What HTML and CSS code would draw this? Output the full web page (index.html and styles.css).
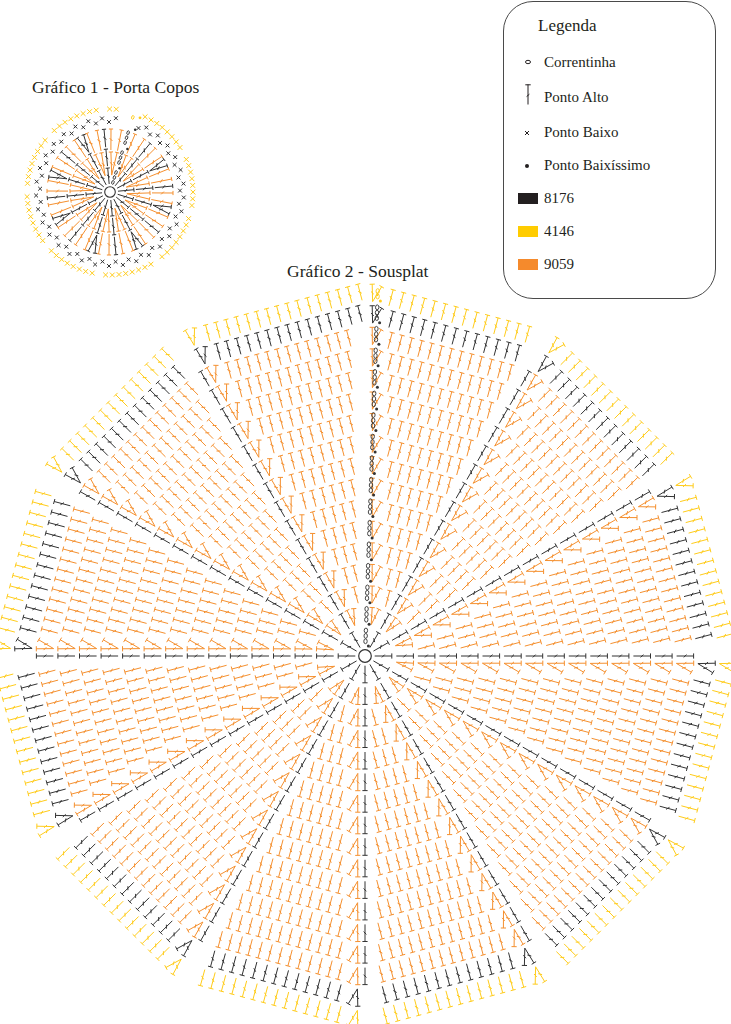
FILE: index.html
```html
<!DOCTYPE html>
<html lang="pt">
<head>
<meta charset="utf-8">
<title>Gráficos - Porta Copos e Sousplat</title>
<link rel="stylesheet" href="styles.css">
</head>
<body>
<main class="sheet">
  <svg id="chart" class="chart" width="731" height="1024" viewBox="0 0 731 1024" xmlns="http://www.w3.org/2000/svg">
    <text class="title" x="32" y="93">Gráfico 1 - Porta Copos</text>
    <text class="title" x="287" y="277">Gráfico 2 - Sousplat</text>
    <g id="marks"></g>
  </svg>
  <aside class="legend">
    <h2 class="legend-title">Legenda</h2>
    <ul class="legend-list">
      <li class="legend-item legend-item--first">
        <span class="legend-icon"><svg width="20" height="12" viewBox="0 0 20 12"><ellipse cx="10" cy="6" rx="2.5" ry="1.7" fill="none" stroke="#231f20" stroke-width="1"/></svg></span>
        <span>Correntinha</span>
      </li>
      <li class="legend-item legend-item--tall">
        <span class="legend-icon"><svg width="20" height="28" viewBox="0 0 20 28"><path d="M10 0.5V20.5M7.3 0.8H12.7M8.6 12.6L11.4 10.2" fill="none" stroke="#231f20" stroke-width="1"/></svg></span>
        <span>Ponto Alto</span>
      </li>
      <li class="legend-item">
        <span class="legend-icon"><svg width="20" height="10" viewBox="0 0 20 10"><path d="M7 3L11 7M7 7L11 3" fill="none" stroke="#231f20" stroke-width="1"/></svg></span>
        <span>Ponto Baixo</span>
      </li>
      <li class="legend-item">
        <span class="legend-icon"><svg width="20" height="10" viewBox="0 0 20 10"><circle cx="9" cy="5" r="2" fill="#231f20"/></svg></span>
        <span>Ponto Baixíssimo</span>
      </li>
      <li class="legend-item">
        <span class="legend-icon"><span class="swatch swatch--black"></span></span>
        <span>8176</span>
      </li>
      <li class="legend-item">
        <span class="legend-icon"><span class="swatch swatch--yellow"></span></span>
        <span>4146</span>
      </li>
      <li class="legend-item">
        <span class="legend-icon"><span class="swatch swatch--orange"></span></span>
        <span>9059</span>
      </li>
    </ul>
  </aside>
</main>
<script src="script.js"></script>
</body>
</html>
```
FILE: styles.css
```css
* { box-sizing: border-box; }
html, body { margin: 0; padding: 0; background: #ffffff; }
body {
  font-family: "Liberation Serif", "Times New Roman", serif;
  color: #231f20;
}
.sheet {
  position: relative;
  width: 731px;
  height: 1024px;
  overflow: hidden;
}
.chart { display: block; }
.title {
  font-family: "Liberation Serif", "Times New Roman", serif;
  font-size: 17.5px;
  fill: #231f20;
}
.legend {
  position: absolute;
  left: 503px;
  top: 1px;
  width: 213px;
  height: 298px;
  border: 1.2px solid #4a4a4a;
  border-radius: 30px;
  padding-top: 5px;
  background: #ffffff;
}
.legend-title {
  margin: 0;
  height: 38px;
  line-height: 38px;
  padding-left: 34px;
  font-size: 17px;
  font-weight: normal;
}
.legend-list { list-style: none; margin: 0; padding: 0; }
.legend-item {
  display: flex;
  align-items: center;
  gap: 6px;
  height: 33px;
  padding-left: 14px;
  font-size: 15px;
}
.legend-item--first { height: 34px; }
.legend-item--tall { height: 37px; }
.legend-icon {
  width: 20px;
  height: 100%;
  display: flex;
  align-items: center;
  justify-content: center;
}
.legend-icon svg { display: block; }
.swatch { display: block; width: 20px; height: 11px; }
.swatch--black { background: #231f20; }
.swatch--yellow { background: #ffcc00; }
.swatch--orange { background: #f58a2c; }
```
FILE: script.js
```js
(function () {
  var COL = { k: '#333333', o: '#f5902f', y: '#ffcc1a' };
  var P = { k: [], o: [], y: [] };
  var extra = [];
  var D = Math.PI / 180;
  function f(n) { return n.toFixed(1); }
  function seg(c, x0, y0, x1, y1) {
    P[c].push('M' + f(x0) + ' ' + f(y0) + 'L' + f(x1) + ' ' + f(y1));
  }
  function dc(c, bx, by, tx, ty, bw) {
    bw = bw || 2.6;
    var dx = tx - bx, dy = ty - by, L = Math.hypot(dx, dy);
    var ux = dx / L, uy = dy / L, px = -uy, py = ux;
    seg(c, bx, by, tx, ty);
    seg(c, tx + px * bw, ty + py * bw, tx - px * bw, ty - py * bw);
    var mx = bx + dx * 0.5, my = by + dy * 0.5, t = 1.4;
    seg(c, mx + px * t - ux * t, my + py * t - uy * t, mx - px * t + ux * t, my - py * t + uy * t);
  }
  function sc(c, x, y, s) {
    seg(c, x - s, y - s, x + s, y + s);
    seg(c, x - s, y + s, x + s, y - s);
  }
  function oval(c, x, y, ang, rx, ry) {
    extra.push('<ellipse cx="' + f(x) + '" cy="' + f(y) + '" rx="' + rx + '" ry="' + ry +
      '" transform="rotate(' + f(ang) + ' ' + f(x) + ' ' + f(y) + ')" fill="none" stroke="' + COL[c] + '" stroke-width="0.9"/>');
  }
  function dot(c, x, y, r) {
    extra.push('<circle cx="' + f(x) + '" cy="' + f(y) + '" r="' + r + '" fill="' + COL[c] + '"/>');
  }

  /* ---------- Gráfico 2 - Sousplat ---------- */
  var cx = 365, cy = 656, R0 = 7, NR = 17, H = (361 - R0) / NR;
  var T15 = Math.tan(15 * D), C15 = Math.cos(15 * D), S = 10.6;
  for (var k = 0; k < 12; k++) {
    var a = (-90 + 30 * k) * D, b = a + 15 * D;
    var ex = Math.cos(b), ey = Math.sin(b), qx = -Math.sin(b), qy = Math.cos(b);
    var pt = (function (ex, ey, qx, qy) {
      return function (u, v) { return [cx + ex * u + qx * v, cy + ey * u + qy * v]; };
    })(ex, ey, qx, qy);
    for (var r = 2; r <= NR; r++) {
      var uT = R0 + r * H, uB = uT - H * 0.8;
      var c = r === NR ? 'y' : (r === NR - 1 ? 'k' : 'o');
      var outer = r >= NR - 1;
      var wB = uB * T15;
      var vS = -wB + 3;
      var vEnd = wB - (outer ? (6 + 0.035 * uT) : (5 + 0.03 * uT));
      if (k === 11 && outer) vEnd = wB - 3;
      var span = vEnd - vS;
      if (span < -2) continue;
      if (span < S * 0.6) {
        var bb = pt(uB, (vS + vEnd) / 2), tt = pt(uT, (vS + vEnd) / 2);
        dc(c, bb[0], bb[1], tt[0], tt[1]);
        continue;
      }
      var slots = Math.max(1, Math.round(span / S)), sp = span / slots;
      var b0 = pt(uB, vS + sp * 0.45), t1 = pt(uT, vS), t2 = pt(uT, vS + sp * 0.9);
      dc(c, b0[0], b0[1], t1[0], t1[1]);
      dc(c, b0[0], b0[1], t2[0], t2[1]);
      for (var i0 = 2; i0 <= slots; i0++) {
        var vv = vS + i0 * sp;
        var B = pt(uB, vv), T = pt(uT, vv);
        dc(c, B[0], B[1], T[0], T[1]);
      }
    }
    /* spokes */
    var sx = Math.cos(a), sy = Math.sin(a);
    if (k === 0) {
      var ad = -88, a0 = ad * D, zx = Math.cos(a0), zy = Math.sin(a0), nx = -zy, ny = zx;
      for (var rr = 1; rr <= NR; rr++) {
        var r0 = (R0 + (rr - 1) * H) / C15 + 2;
        var cc = rr === NR ? 'y' : 'k';
        dot(cc, cx + zx * (r0 + 1) + nx * 3, cy + zy * (r0 + 1) + ny * 3, 1.5);
        for (var j = 0; j < 3; j++) {
          var rho = r0 + 5.5 + j * 5.4;
          if (rr === NR && j > 1) break;
          oval(cc, cx + zx * rho, cy + zy * rho, ad, 2.4, 1.7);
        }
      }
    } else {
      for (var rs = 1; rs <= NR - 2; rs++) {
        var rb = (R0 + (rs - 1) * H) / C15 + 2.5, rt = (R0 + rs * H) / C15 - 2;
        dc('k', cx + sx * rb, cy + sy * rb, cx + sx * rt, cy + sy * rt);
      }
    }
  }
  extra.push('<circle cx="' + cx + '" cy="' + cy + '" r="6.3" fill="none" stroke="#333333" stroke-width="1.2"/>');

  /* ---------- Gráfico 1 - Porta Copos ---------- */
  var gx = 110, gy = 192;
  function pp(rad, ang) { return [gx + Math.cos(ang * D) * rad, gy + Math.sin(ang * D) * rad]; }
  function rdc(c, r1, a1, r2, a2, bw) {
    var p1 = pp(r1, a1), p2 = pp(r2, a2);
    dc(c, p1[0], p1[1], p2[0], p2[1], bw || 2.1);
  }
  extra.push('<circle cx="' + gx + '" cy="' + gy + '" r="5.3" fill="none" stroke="#333333" stroke-width="1.1"/>');
  var base = -73, step = 22.5;
  for (var g = 0; g < 16; g++) {
    var phi = base + step * g;
    if (g === 0) {
      for (var m = 0; m < 12; m++) {
        var rh = 10 + m * 5.2;
        if (m % 4 === 3) {
          var pd = pp(rh, phi + 5);
          dot('k', pd[0], pd[1], 1.3);
        } else {
          var po = pp(rh, phi);
          oval('k', po[0], po[1], phi, 1.9, 1.2);
        }
      }
      var py1 = pp(78, phi), py2 = pp(80, phi + 5);
      oval('y', py1[0], py1[1], phi, 1.9, 1.2);
      dot('y', py2[0], py2[1], 1.4);
    } else {
      rdc('k', 8, phi, 24, phi);
      rdc('k', 26, phi, 43, phi);
      if (g % 2 === 0) {
        rdc('k', 45, phi, 63, phi - 3.2);
        rdc('k', 45, phi, 63, phi + 3.2);
      } else {
        rdc('k', 45, phi, 63, phi);
      }
    }
    var ph = phi + step / 2;
    rdc('o', 17, ph, 40, ph - 4.5);
    rdc('o', 17, ph, 40, ph + 4.5);
    rdc('o', 42, ph - 4.5, 63, ph - 4.8);
    rdc('o', 42, ph + 4.5, 63, ph + 4.8);
  }
  var nB = 64;
  for (var i = 0; i < nB; i++) {
    var an = base + 7 + i * (346 / nB);
    var q = pp(70 + (i % 2) * 4, an);
    sc('k', q[0], q[1], 1.9);
  }
  var nY = 74;
  for (var i2 = 0; i2 < nY; i2++) {
    var an2 = base + 8 + i2 * (344 / nY);
    if (i2 % 9 === 8) continue;
    var q2 = pp(83, an2);
    sc('y', q2[0], q2[1], 2.4);
  }

  var html = '';
  ['o', 'y', 'k'].forEach(function (c) {
    html += '<path d="' + P[c].join('') + '" fill="none" stroke="' + COL[c] + '" stroke-width="1" stroke-linecap="butt"/>';
  });
  html += extra.join('');
  document.getElementById('marks').innerHTML = html;
})();
```
